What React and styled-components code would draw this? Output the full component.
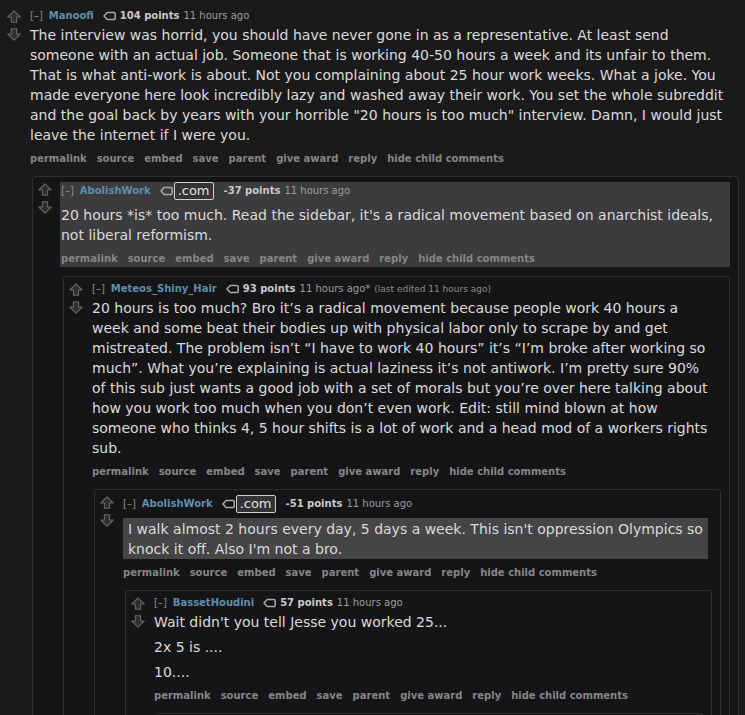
import React from "react";
import styled, { createGlobalStyle, css } from "styled-components";

const Global = createGlobalStyle`
  html, body { margin: 0; padding: 0; background: #1a1a1b; }
  body { font-family: "DejaVu Sans", Verdana, sans-serif; color: #dadada; overflow: hidden; }
`;

const Page = styled.div`
  width: 745px;
  min-height: 715px;
  background: #1a1a1b;
`;

const Box = styled.div`
  display: flex;
  align-items: flex-start;
  border: 1px solid transparent;
  ${(p) =>
    p.$nested
      ? css`
          margin: 9px 0 0 3px;
          padding: 5px 8px 0 0;
          border-color: #2f2f31;
          border-radius: 3px;
          background: #151517;
        `
      : css`
          margin-left: 1px;
          padding: 8px 5px 0 0;
        `}
`;

const Votes = styled.div`
  flex: 0 0 27px;
  display: flex;
  flex-direction: column;
  gap: 5px;
  padding: 1px 0 0 5px;
  box-sizing: border-box;
`;

const Entry = styled.div`
  flex: 1;
  min-width: 0;
`;

const Main = styled.div`
  padding-left: 1px;
  ${(p) => p.$hl && css`background: #3c3c3e;`}
`;

const Tagline = styled.div`
  display: flex;
  align-items: center;
  min-height: 14px;
  padding-bottom: ${(p) => (p.$flair ? "3px" : "0")};
  font-size: 10px;
  line-height: 14px;
  color: #8a8a8a;
  white-space: nowrap;
`;

const Collapse = styled.span`
  color: #8a8a8a;
  margin-right: 6px;
`;

const Author = styled.span`
  color: #5f8eab;
  font-weight: bold;
`;

const TagIcon = styled.svg`
  margin: 0 ${(p) => (p.$flair ? "1px" : "4px")} 0 9px;
  flex: none;
`;

const Flair = styled.span`
  display: inline-block;
  font-size: 13px;
  line-height: 16px;
  padding: 0 3px;
  border: 1px solid #cfcfcf;
  border-radius: 2px;
  background: #343436;
  color: #e2e2e2;
  margin-right: 10px;
`;

const Score = styled.span`
  color: #c9c9c9;
  font-weight: bold;
  margin-right: 4px;
`;

const Time = styled.span`
  color: #9c9c9c;
`;

const Edited = styled.span`
  color: #8a8a8a;
  font-size: 9px;
  margin-left: 4px;
`;

const Body = styled.div`
  margin: 2px 0 5px;
  font-size: 14px;
  line-height: 20px;
  color: #dadada;
  white-space: nowrap;
  ${(p) =>
    p.$hl &&
    css`
      background: #454547;
      padding: 1px 1px 0 5px;
      margin-right: 4px;
    `}
`;

const Para = styled.p`
  margin: 0;
  & + & { margin-top: 5px; }
`;

const Buttons = styled.ul`
  display: flex;
  gap: 10px;
  list-style: none;
  margin: 0;
  padding: 2px 0 1px;
  font-size: 10px;
  line-height: 14px;
  font-weight: bold;
  color: #858585;
  white-space: nowrap;
`;

const Children = styled.div``;

function Arrow({ down }) {
  return (
    <svg width="14" height="13" viewBox="0 0 14 13">
      <path
        d="M7 0.8 L13.2 7 H9.6 V12.2 H4.4 V7 H0.8 Z"
        fill="#2f2f31"
        stroke="#666668"
        strokeWidth="1.1"
        strokeLinejoin="round"
        transform={down ? "rotate(180 7 6.5)" : undefined}
      />
    </svg>
  );
}

function Tag({ flair }) {
  return (
    <TagIcon $flair={flair} width="13" height="10" viewBox="0 0 13 10">
      <path
        d="M1 5 L4.2 1.4 H10.8 A1.4 1.4 0 0 1 12.2 2.8 V7.2 A1.4 1.4 0 0 1 10.8 8.6 H4.2 Z"
        fill="none"
        stroke="#a8a8a8"
        strokeWidth="1.5"
        strokeLinejoin="round"
      />
    </TagIcon>
  );
}

const ACTIONS = ["permalink", "source", "embed", "save", "parent", "give award", "reply", "hide child comments"];

// a paragraph is a list of its lines, as the comment was laid out
function Paragraph({ lines }) {
  return (
    <Para>
      {lines.map((l, i) => (
        <React.Fragment key={i}>
          {i > 0 && <br />}
          {l}
        </React.Fragment>
      ))}
    </Para>
  );
}

function Comment({ c, nested }) {
  return (
    <Box $nested={nested}>
      <Votes>
        <Arrow />
        <Arrow down />
      </Votes>
      <Entry>
        <Main $hl={c.hl === "entry"}>
          <Tagline $flair={!!c.flair}>
            <Collapse>[–]</Collapse>
            <Author>{c.author}</Author>
            <Tag flair={!!c.flair} />
            {c.flair && <Flair>{c.flair}</Flair>}
            <Score>{c.points}</Score>
            <Time>{c.time}</Time>
            {c.edited && <Edited>{c.edited}</Edited>}
          </Tagline>
          <Body $hl={c.hl === "body"}>
            {c.paras.map((p, i) => (
              <Paragraph key={i} lines={p} />
            ))}
          </Body>
          <Buttons>
            {ACTIONS.map((a) => (
              <li key={a}>{a}</li>
            ))}
          </Buttons>
        </Main>
        {c.children && (
          <Children>
            {c.children.map((k, i) => (
              <Comment key={i} c={k} nested />
            ))}
          </Children>
        )}
      </Entry>
    </Box>
  );
}

const thread = {
  author: "Manoofi",
  points: "104 points",
  time: "11 hours ago",
  paras: [
    [
      "The interview was horrid, you should have never gone in as a representative. At least send",
      "someone with an actual job. Someone that is working 40-50 hours a week and its unfair to them.",
      "That is what anti-work is about. Not you complaining about 25 hour work weeks. What a joke. You",
      "made everyone here look incredibly lazy and washed away their work. You set the whole subreddit",
      "and the goal back by years with your horrible \"20 hours is too much\" interview. Damn, I would just",
      "leave the internet if I were you.",
    ],
  ],
  children: [
    {
      author: "AbolishWork",
      flair: ".com",
      points: "-37 points",
      time: "11 hours ago",
      hl: "entry",
      paras: [
        [
          "20 hours *is* too much. Read the sidebar, it's a radical movement based on anarchist ideals,",
          "not liberal reformism.",
        ],
      ],
      children: [
        {
          author: "Meteos_Shiny_Hair",
          points: "93 points",
          time: "11 hours ago*",
          edited: "(last edited 11 hours ago)",
          paras: [
            [
              "20 hours is too much? Bro it’s a radical movement because people work 40 hours a",
              "week and some beat their bodies up with physical labor only to scrape by and get",
              "mistreated. The problem isn’t “I have to work 40 hours” it’s “I’m broke after working so",
              "much”. What you’re explaining is actual laziness it’s not antiwork. I’m pretty sure 90%",
              "of this sub just wants a good job with a set of morals but you’re over here talking about",
              "how you work too much when you don’t even work. Edit: still mind blown at how",
              "someone who thinks 4, 5 hour shifts is a lot of work and a head mod of a workers rights",
              "sub.",
            ],
          ],
          children: [
            {
              author: "AbolishWork",
              flair: ".com",
              points: "-51 points",
              time: "11 hours ago",
              hl: "body",
              paras: [
                [
                  "I walk almost 2 hours every day, 5 days a week. This isn't oppression Olympics so",
                  "knock it off. Also I'm not a bro.",
                ],
              ],
              children: [
                {
                  author: "BassetHoudini",
                  points: "57 points",
                  time: "11 hours ago",
                  paras: [["Wait didn't you tell Jesse you worked 25..."], ["2x 5 is ...."], ["10...."]],
                  children: [
                    {
                      author: "Meteos_Shiny_Hair",
                      points: "41 points",
                      time: "11 hours ago",
                      paras: [["Lol."]],
                    },
                  ],
                },
              ],
            },
          ],
        },
      ],
    },
  ],
};

export default function App() {
  return (
    <Page>
      <Global />
      <Comment c={thread} />
    </Page>
  );
}
